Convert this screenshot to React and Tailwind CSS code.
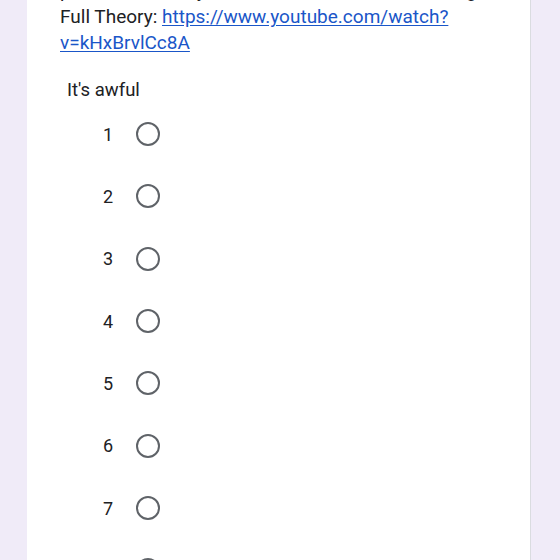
import React from 'react';

const options = [1, 2, 3, 4, 5, 6, 7, 8];

const App = () => {
  return (
    <div className="w-[560px] h-[560px] overflow-hidden bg-[#f0ebf8]" style={{ fontFamily: 'Roboto, "Liberation Sans", sans-serif' }}>
      <div className="ml-[27px] w-[504px] -mt-[22px] bg-white border-r border-[#dadce0] pb-10">
        {/* descripción */}
        <div className="pl-[33px] pr-6 text-[19px] leading-[26px] text-[#202124]">
          <p>part of the theory about the final scene is missing</p>
          <p>
            Full Theory:{' '}
            <a href="#" className="text-[#1a56c8] underline underline-offset-2">
              https://www.youtube.com/watch?v=kHxBrvlCc8A
            </a>
          </p>
        </div>

        <div className="pl-[40px] mt-[22px] text-[18.5px] leading-[24px] text-[#202124]">It's awful</div>

        {/* escala */}
        <div className="mt-[1px]">
          {options.map((n) => (
            <div key={n} className="h-[62.33px] flex items-center">
              <span className="w-[95px] pr-[9px] text-right text-[18px] text-[#202124]">{n}</span>
              <span className="ml-[14px] w-[24px] h-[24px] rounded-full border-[2.5px] border-[#5f6368]" />
            </div>
          ))}
        </div>
      </div>
    </div>
  );
};

export default App;
